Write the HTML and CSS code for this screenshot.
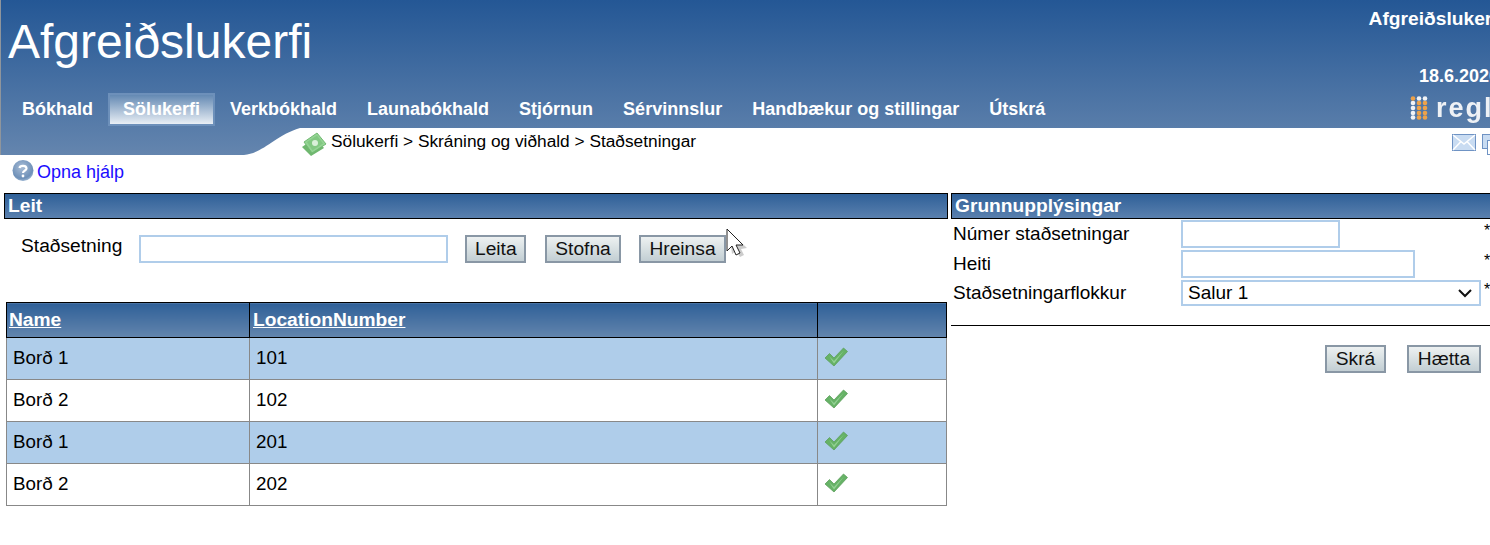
FILE: index.html
```html
<!DOCTYPE html>
<html lang="is">
<head>
<meta charset="utf-8">
<title>Afgreiðslukerfi</title>
<link rel="stylesheet" href="styles.css">
</head>
<body>
<div class="page">
  <header class="top">
    <div class="top-main">
      <div class="brand">
        <h1 class="title">Afgreiðslukerfi</h1>
        <nav class="nav">
          <a class="nav-item">Bókhald</a>
          <a class="nav-item active">Sölukerfi</a>
          <a class="nav-item">Verkbókhald</a>
          <a class="nav-item">Launabókhald</a>
          <a class="nav-item">Stjórnun</a>
          <a class="nav-item">Sérvinnslur</a>
          <a class="nav-item">Handbækur og stillingar</a>
          <a class="nav-item">Útskrá</a>
        </nav>
      </div>
      <div class="top-side">
        <div class="side-name">Afgreiðslukerfi</div>
        <div class="side-date">18.6.2020</div>
        <div class="logo">
          <svg class="logo-dots" width="18" height="24" viewBox="0 0 18 24">
            <g fill="#f1f3f6"><circle cx="9" cy="2.500" r="2.300"/><circle cx="15" cy="2.500" r="2.300"/><circle cx="3" cy="7" r="2.300"/><circle cx="3" cy="12" r="2.300"/><circle cx="3" cy="17" r="2.300"/><circle cx="3" cy="21.500" r="2.300"/></g>
            <g fill="#eda24a"><circle cx="3" cy="2.500" r="2.300"/><circle cx="9" cy="7" r="2.300"/><circle cx="15" cy="7" r="2.300"/><circle cx="9" cy="12" r="2.300"/><circle cx="15" cy="12" r="2.300"/><circle cx="9" cy="17" r="2.300"/><circle cx="15" cy="17" r="2.300"/><circle cx="9" cy="21.500" r="2.300"/><circle cx="15" cy="21.500" r="2.300"/></g>
          </svg>
          <span class="logo-text">regla</span>
        </div>
      </div>
    </div>
    <div class="crumb-row">
      <svg class="swoosh" width="300" height="27" viewBox="0 0 300 27" preserveAspectRatio="none">
        <path d="M300 0V27H244C264 25 274 8 300 0Z" fill="#fff"/>
      </svg>
      <div class="crumbs">
        <svg class="money" width="26" height="26" viewBox="0 0 26 26">
          <path d="M1 17 14 8 23 18 10 26Z" fill="#6fb76f"/>
          <path d="M3 12 16 3 25 14 11 23Z" fill="#94d494" stroke="#72ba72"/>
          <path d="M6 12 16 5.500 22 13.500 11.500 20.500Z" fill="#82c882"/>
          <circle cx="14" cy="13" r="3" fill="#d9f0d9"/>
        </svg>
        <span class="crumb-text">Sölukerfi &gt; Skráning og viðhald &gt; Staðsetningar</span>
        <div class="tools">
          <svg width="24" height="17" viewBox="0 0 24 17">
            <rect x=".5" y=".5" width="23" height="16" fill="#c9dcf2" stroke="#6f93c4"/>
            <path d="M1 1 12 10 23 1M1 16 9 7.500M23 16 15 7.500" fill="none" stroke="#fff" stroke-width="1.500"/>
          </svg>
          <svg width="24" height="22" viewBox="0 0 24 22">
            <rect x=".5" y=".5" width="14" height="14" fill="#c9dcf2" stroke="#6f93c4"/>
            <rect x="5.500" y="6.500" width="14" height="14" fill="#fff" stroke="#6f93c4"/>
          </svg>
        </div>
      </div>
    </div>
  </header>

  <div class="help">
    <svg class="help-icon" width="22" height="22" viewBox="0 0 22 22">
      <defs><radialGradient id="hb" cx=".45" cy=".35" r=".7"><stop offset="0" stop-color="#a9bdd6"/><stop offset=".75" stop-color="#6e90b8"/><stop offset="1" stop-color="#a8c0da"/></radialGradient></defs>
      <circle cx="11" cy="10.500" r="10.500" fill="url(#hb)"/>
      <path d="M7.500 8C8 5 14.500 5 14.500 8.500 14.500 10.500 11 10.500 11 13" fill="none" stroke="#fff" stroke-width="2.200"/>
      <circle cx="11" cy="16" r="1.400" fill="#fff"/>
    </svg>
    <a class="help-link">Opna hjálp</a>
  </div>

  <main class="columns">
    <section class="left">
      <h2 class="bar">Leit</h2>
      <div class="search">
        <label class="search-label">Staðsetning</label>
        <input class="field search-field" type="text">
        <button class="btn btn-leita">Leita</button>
        <button class="btn btn-stofna">Stofna</button>
        <button class="btn btn-hreinsa">Hreinsa</button>
      </div>
      <table class="grid">
        <thead>
          <tr><th class="c1"><a>Name</a></th><th class="c2"><a>LocationNumber</a></th><th class="c3"></th></tr>
        </thead>
        <tbody>
          <tr class="alt"><td>Borð 1</td><td>101</td><td><svg class="check" width="24" height="20" viewBox="0 0 24 20"><path d="M1 11 5.500 6.500 10 11 19.500 1 23.500 4.500 10 19Z" fill="#66b266" stroke="#5d9f5d" stroke-width=".8"/><path d="M5 9 10 14 20 3.500 10 16.500Z" fill="#93d193"/></svg></td></tr>
          <tr><td>Borð 2</td><td>102</td><td><svg class="check" width="24" height="20" viewBox="0 0 24 20"><path d="M1 11 5.500 6.500 10 11 19.500 1 23.500 4.500 10 19Z" fill="#66b266" stroke="#5d9f5d" stroke-width=".8"/><path d="M5 9 10 14 20 3.500 10 16.500Z" fill="#93d193"/></svg></td></tr>
          <tr class="alt"><td>Borð 1</td><td>201</td><td><svg class="check" width="24" height="20" viewBox="0 0 24 20"><path d="M1 11 5.500 6.500 10 11 19.500 1 23.500 4.500 10 19Z" fill="#66b266" stroke="#5d9f5d" stroke-width=".8"/><path d="M5 9 10 14 20 3.500 10 16.500Z" fill="#93d193"/></svg></td></tr>
          <tr><td>Borð 2</td><td>202</td><td><svg class="check" width="24" height="20" viewBox="0 0 24 20"><path d="M1 11 5.500 6.500 10 11 19.500 1 23.500 4.500 10 19Z" fill="#66b266" stroke="#5d9f5d" stroke-width=".8"/><path d="M5 9 10 14 20 3.500 10 16.500Z" fill="#93d193"/></svg></td></tr>
        </tbody>
      </table>
    </section>

    <section class="right">
      <h2 class="bar">Grunnupplýsingar</h2>
      <div class="form-row row-1">
        <label class="form-label">Númer staðsetningar</label>
        <input class="field f-num" type="text">
        <span class="req">*</span>
      </div>
      <div class="form-row row-2">
        <label class="form-label">Heiti</label>
        <input class="field f-name" type="text">
        <span class="req">*</span>
      </div>
      <div class="form-row row-3">
        <label class="form-label">Staðsetningarflokkur</label>
        <div class="select">
          <span>Salur 1</span>
          <svg width="16" height="10" viewBox="0 0 16 10"><path d="M2 2 8 8 14 2" fill="none" stroke="#111" stroke-width="2"/></svg>
        </div>
        <span class="req">*</span>
      </div>
      <hr class="rule">
      <div class="actions">
        <button class="btn btn-skra">Skrá</button>
        <button class="btn btn-haetta">Hætta</button>
      </div>
    </section>
  </main>

  <svg class="cursor" width="22" height="30" viewBox="0 0 22 30">
    <path d="M3 3 21 20 15 21 18 27 14 29 10 23 6 26Z" fill="#000" opacity=".2"/>
    <path d="M1 1V23L6 18 10 27 14 25 10 17H17Z" fill="#fff" stroke="#222" stroke-width="1"/>
  </svg>
</div>
</body>
</html>
```
FILE: styles.css
```css
* { box-sizing: border-box; }
html, body { margin: 0; padding: 0; height: 100%; overflow: hidden; background: #fff; }
body { font-family: "Liberation Sans", Arial, sans-serif; color: #000; }
.page { position: relative; width: 1490px; height: 545px; overflow: hidden; }
.page::before { content: ""; position: absolute; left: 0; top: 0; width: 1px; height: 155px; background: #8f959c; }

.top { width: 1490px; height: 155px; background: linear-gradient(#245795 0, #6485ae 100%); }
.top-main { display: flex; height: 128px; width: 1504px; }
.brand { flex: 1; min-width: 0; }
.title { margin: 0; padding: 15px 0 0 8px; font-weight: 400; font-size: 48px; line-height: 54px; height: 93px; color: #fff; }
.nav { display: flex; padding-left: 7px; height: 35px; }
.nav-item { display: block; height: 33px; padding: 0 14px; margin: 0; border: 1px solid transparent; font-weight: 700; font-size: 18px; line-height: 31px; color: #fff; }
.nav-item.active { border: 2px solid #6d90ba; padding: 0 13px; line-height: 29px; background: linear-gradient(#6489b3, #e9eff5); }

.top-side { display: flex; flex-direction: column; align-items: flex-end; width: 155px; color: #fff; font-weight: 700; font-size: 18px; }
.side-name { padding-top: 9px; font-size: 19.2px; line-height: 20px; white-space: nowrap; }
.side-date { padding-top: 37px; margin-right: 5px; line-height: 20px; }
.logo { display: flex; align-self: flex-start; align-items: center; gap: 8px; margin: 9px 0 0 61px; height: 26px; }
.logo-text { font-size: 27px; line-height: 26px; letter-spacing: 2px; color: #eef1f5; filter: blur(.5px); }

.crumb-row { display: flex; height: 27px; }
.swoosh { display: block; flex: none; }
.crumbs { flex: 1; display: flex; align-items: flex-start; background: #fff; height: 27px; }
.money { flex: none; margin: 2px 4px 0 1px; }
.crumb-text { font-size: 17.3px; line-height: 26px; white-space: nowrap; }
.tools { margin-left: auto; display: flex; gap: 6px; padding-top: 6px; flex: none; width: 38px; overflow: hidden; }
.tools svg { flex: none; }

.help { display: flex; align-items: center; height: 38px; padding: 0 0 4px 12px; gap: 3px; font-size: 18px; }
.help-icon { margin-bottom: 2px; }
.help-link { color: #1a0dff; }

.columns { display: flex; padding-left: 4px; gap: 3px; }
.bar { margin: 0; height: 26px; border: 1px solid #000; background: linear-gradient(#2f6098, #5a80ae); color: #fff; font-size: 19.2px; font-weight: 700; line-height: 23px; padding-left: 3px; }
.left { width: 944px; flex: none; }
.right { width: 560px; flex: none; }

.search { display: flex; align-items: flex-start; height: 83px; padding: 16px 0 0 17px; font-size: 19.2px; }
.search-label { width: 118px; line-height: 22px; flex: none; }
.field { display: block; border: 2px solid #b0cdea; background: #fff; padding: 0; margin: 0; font: inherit; outline: none; }
.search-field { width: 309px; height: 28px; margin: 0 17px 0 0; }

.btn { display: block; height: 28px; padding: 0 8px; border: 2px solid #8997a5; background: linear-gradient(#edf1f1, #c2ced3); font-family: "Liberation Sans", Arial, sans-serif; font-size: 19.2px; line-height: 24px; color: #111; flex: none; }
.btn-leita { width: 61px; margin-right: 19px; }
.btn-stofna { width: 76px; margin-right: 18px; }
.btn-hreinsa { width: 87px; }
.btn-skra { width: 61px; }
.btn-haetta { width: 74px; }

.grid { margin-left: 2px; width: 941px; border-collapse: collapse; table-layout: fixed; font-size: 18.8px; }
.grid th { height: 35px; border: 1px solid #000; background: linear-gradient(#2f6098, #6385ad); color: #fff; text-align: left; padding: 0 3px; font-weight: 700; font-size: 19.2px; }
.grid th.c1 { padding-left: 2px; }
.grid th a { text-decoration: underline; color: #fff; }
.grid td { height: 42px; border: 1px solid #888; padding: 0 6px 2px; vertical-align: middle; }
.grid td:nth-child(3) { padding: 0 0 4px 6px; }
.grid tr.alt td { background: #afcdea; }
.c1 { width: 243px; }
.c2 { width: 568px; }
.check { display: block; }

.form-row { display: flex; align-items: flex-start; height: 30px; padding-left: 2px; font-size: 19px; }
.row-1 { margin-top: 1px; }
.form-label { width: 228px; flex: none; line-height: 28px; }
.f-num { width: 159px; height: 28px; margin-right: 144px; flex: none; }
.f-name { width: 234px; height: 28px; margin-right: 69px; flex: none; }
.select { width: 300px; height: 26px; border: 2px solid #b0cdea; display: flex; align-items: center; justify-content: space-between; padding: 0 6px 0 5px; margin-right: 3px; flex: none; line-height: 22px; }
.req { font-size: 16px; line-height: 21px; flex: none; }
.row-3 { height: 26px; }
.row-3 .form-label { line-height: 26px; }
.row-3 .req { line-height: 19px; }
.rule { margin: 19px 0 0; border: 0; border-top: 1px solid #000; height: 1px; width: 539px; }
.actions { display: flex; gap: 21px; padding: 19px 0 0 374px; }
.actions .btn { padding: 0 6px; }

.cursor { position: absolute; left: 726px; top: 228px; }
```
